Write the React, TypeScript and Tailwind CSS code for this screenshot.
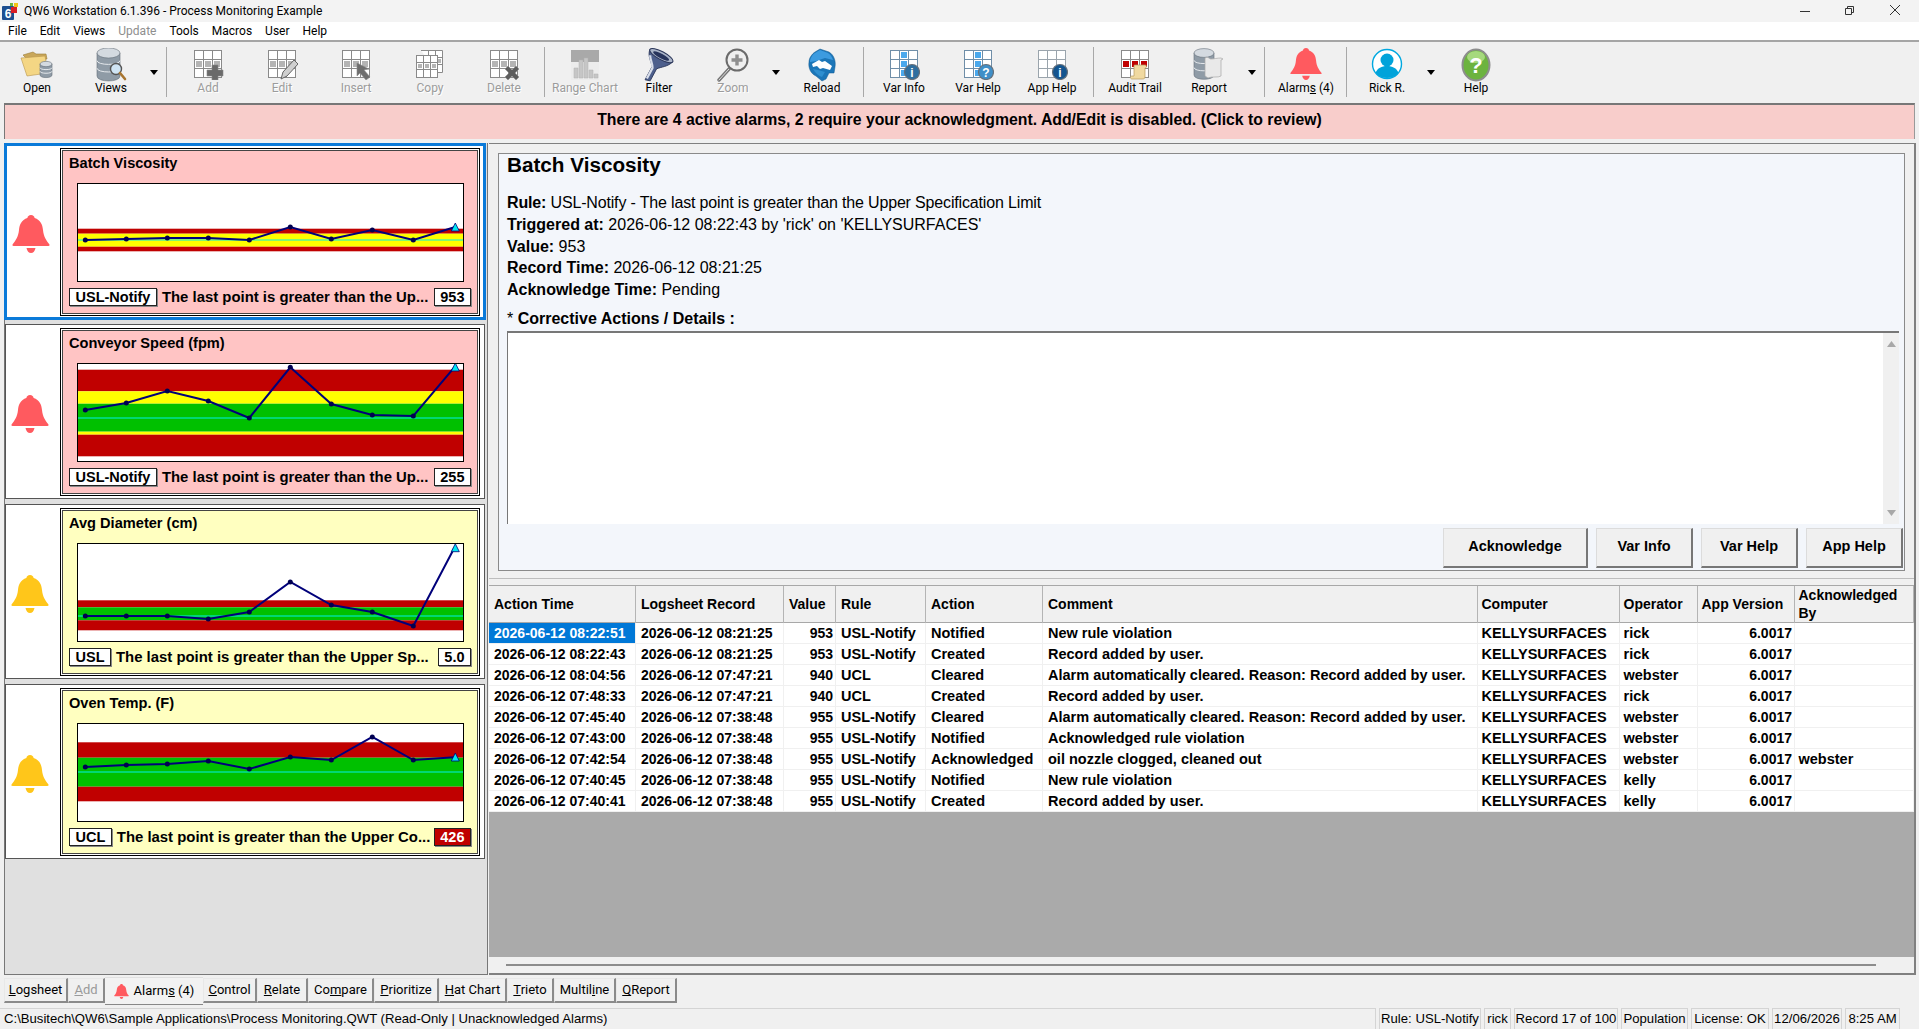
import type { ReactNode } from 'react'

type Band = { from: number; to: number; color: string }

const RED = '#c00000'
const YELLOW = '#ffff00'
const GREEN = '#00c000'

function GridIcon({ line = '#8a8a8a', cell = '#b4b4b4', cells = [3, 4, 5], red = false, children }: { line?: string; cell?: string; cells?: number[]; red?: boolean; children?: ReactNode }) {
  return (
    <svg width="32" height="32" viewBox="0 0 32 32">
      <rect x="2.5" y="2.5" width="27" height="27" fill="#fff" stroke={line} />
      {[0, 1, 2, 3, 4, 5, 6, 7, 8].map((i) =>
        cells.includes(i) ? (
          <rect key={i} x={4 + (i % 3) * 9} y={4 + Math.floor(i / 3) * 9} width="6" height="6" fill={red ? '#c00000' : cell} />
        ) : null
      )}
      <path d="M11.5 2.5v27M20.5 2.5v27M2.5 11.5h27M2.5 20.5h27" stroke={line} fill="none" />
      {children}
    </svg>
  )
}

function Cylinder({ x, y, w, h }: { x: number; y: number; w: number; h: number }) {
  const ry = w * 0.22
  return (
    <g>
      <path d={`M${x} ${y}v${h}c0 ${ry * 1.3} ${w} ${ry * 1.3} ${w} 0v-${h}z`} fill="#8f9ba6" stroke="#66707a" strokeWidth="0.6" />
      <path d={`M${x} ${y + h * 0.33}c0 ${ry} ${w} ${ry} ${w} 0M${x} ${y + h * 0.66}c0 ${ry} ${w} ${ry} ${w} 0`} stroke="#e4e8ec" strokeWidth="1" fill="none" />
      <ellipse cx={x + w / 2} cy={y} rx={w / 2} ry={ry} fill="#d4dae0" stroke="#66707a" strokeWidth="0.6" />
    </g>
  )
}

function OpenIcon() {
  return (
    <svg width="34" height="32" viewBox="0 0 34 32">
      <path d="M3 7l10-3 3 2 10 0 1 5-18 2z" fill="#c9a75a" stroke="#9a7c38" strokeWidth="0.6" />
      <path d="M1 10l24-2 3 17-21 3z" fill="#f4d684" stroke="#b8964c" strokeWidth="0.6" />
      <Cylinder x={20} y={16} w={12} h={11} />
    </svg>
  )
}

function ViewsIcon() {
  return (
    <svg width="32" height="34" viewBox="0 0 32 34">
      <Cylinder x={2} y={5} w={23} h={23} />
      <circle cx="21" cy="21" r="5.5" fill="#cfe4f4" stroke="#555" strokeWidth="1.4" />
      <path d="M25 25l5 6" stroke="#a8752f" strokeWidth="2.6" strokeLinecap="round" />
    </svg>
  )
}

function CopyIcon() {
  return (
    <svg width="32" height="32" viewBox="0 0 32 32">
      <path d="M7 2.5h21.5v22H24" fill="#fff" stroke="#8a8a8a" />
      <path d="M14.5 2.5v5M21.5 2.5v22M21.5 9.5h7M21.5 16.5h7" stroke="#8a8a8a" fill="none" />
      <rect x="23" y="11" width="4" height="4" fill="#b4b4b4" />
      <rect x="2.5" y="7.5" width="21" height="22" fill="#fff" stroke="#8a8a8a" />
      <path d="M9.5 7.5v22M16.5 7.5v22M2.5 14.5h21M2.5 21.5h21" stroke="#8a8a8a" fill="none" />
      <path d="M4 16h4v4H4zM11 16h4v4h-4zM18 16h4v4h-4z" fill="#b4b4b4" />
    </svg>
  )
}

function RangeIcon() {
  return (
    <svg width="32" height="32" viewBox="0 0 32 32">
      <rect x="2" y="2" width="28" height="12" fill="#a9a9a9" />
      <rect x="2" y="14" width="28" height="18" fill="#ececec" />
      <path d="M5 30V20h4v10zM10 30V12h4v18zM15 30V10h4v20zM20 30V22h4v8zM25 30v-4h4v4z" fill="#c6c6c6" stroke="#b0b0b0" strokeWidth="0.5" />
    </svg>
  )
}

function FilterIcon() {
  return (
    <svg width="32" height="34" viewBox="0 0 32 34">
      <g transform="rotate(28 16 12) translate(1 1)">
        <path d="M2 6c1 7 7 10 10 14v15l5-1.500V20c3-4 9-7 11-14z" fill="#4d5f8c" stroke="#2a3558" strokeWidth="0.8" />
        <path d="M5 11c2 4 6 6 8 10v12" stroke="#d8deea" strokeWidth="2.200" fill="none" />
        <ellipse cx="15" cy="6" rx="13" ry="4" fill="#aab4c8" stroke="#2a3558" strokeWidth="1" />
        <ellipse cx="15" cy="6.500" rx="9" ry="2.300" fill="#27345c" />
      </g>
    </svg>
  )
}

function ZoomIcon() {
  return (
    <svg width="34" height="34" viewBox="0 0 34 34">
      <path d="M13 21L3 32" stroke="#777" strokeWidth="3.400" strokeLinecap="round" />
      <path d="M13 21L3 32" stroke="#ddd" strokeWidth="1" strokeLinecap="round" />
      <circle cx="21" cy="12" r="10.500" fill="#efefef" stroke="#6b6b6b" strokeWidth="2" />
      <path d="M21 6.500v11M15.500 12h11" stroke="#8f8f8f" strokeWidth="3.400" />
    </svg>
  )
}

function ReloadIcon() {
  return (
    <svg width="30" height="34" viewBox="0 0 30 34">
      <path d="M13 1l9 3c5 3 7 9 6 15l-1 6-5 0-3 6-4 2-6-5C4 26 1 20 2 14c0-4 3-8 6-10z" fill="#1c76b8" stroke="#125a90" strokeWidth="0.500" />
      <path d="M13 2l8 3c3 2 4 4 5 7l-8-2-9 3-6 1c0-4 3-8 5-9z" fill="#3c9be0" />
      <path d="M5 16l7-4 3 2 3-1 7 5-2 4-7-2-3 1-3-3-4 1z" fill="#fff" />
      <path d="M6 21c2 4 6 7 9 8l3-5-7-2z" fill="#2f8fd0" />
    </svg>
  )
}

function InfoBadge({ mark, color }: { mark: string; color: string }) {
  return (
    <g>
      <circle cx="24" cy="24" r="7.500" fill={color} stroke="#66707a" strokeWidth="1.200" />
      <text x="24" y="28.500" textAnchor="middle" fontSize="12" fontWeight="700" fill="#fff" fontFamily="Liberation Sans, sans-serif">{mark}</text>
    </g>
  )
}

function AuditScroll() {
  return <path d="M16 17h10c2 0 2 3 0 3v9c0 2-2 2-3 2H13c-2 0-2-3 0-3h2v-9c0-2 0-2 1-2z" fill="#f0d9a0" stroke="#b59a5c" strokeWidth="0.700" />
}

function ReportIcon() {
  return (
    <svg width="32" height="34" viewBox="0 0 32 34">
      <Cylinder x={1} y={5} w={20} h={22} />
      <path d="M12 10c3-2 4 1 6 1 3 0 6-1 10-1l2 1-2 1v16c-3 2-9 0-13 2l-3-2z" fill="#e9e9e9" stroke="#a8a8a8" strokeWidth="0.700" />
    </svg>
  )
}

function BellIcon({ color, size }: { color: string; size: number }) {
  return (
    <svg width={size} height={size} viewBox="0 0 38 38">
      <path d="M19 0c2.200 0 3.400 1.400 3.600 3C28.500 5 30.500 9.500 31 15c.6 6.500 3 10 6.300 14.300.6.900.2 1.700-.9 1.700H1.600c-1.100 0-1.500-.8-.9-1.700C4 25 6.400 21.500 7 15c.5-5.500 2.500-10 8.400-12C15.600 1.400 16.800 0 19 0z" fill={color} />
      <path d="M14.500 33h9c-.5 3-2.300 5-4.500 5s-4-2-4.500-5z" fill={color} />
    </svg>
  )
}

function UserIcon() {
  return (
    <svg width="32" height="32" viewBox="0 0 32 32">
      <circle cx="16" cy="16" r="14.500" fill="#fff" stroke="#00a8e0" strokeWidth="1.400" />
      <circle cx="16" cy="12" r="6.500" fill="#00a3da" />
      <path d="M4.500 25c2-5 6-7 11.500-7s9.500 2 11.500 7c-3 3.500-7 5-11.500 5s-8.500-1.500-11.500-5z" fill="#00a3da" />
    </svg>
  )
}

function HelpIcon() {
  return (
    <svg width="30" height="34" viewBox="0 0 30 34">
      <ellipse cx="15" cy="17" rx="13.500" ry="15.500" fill="#6cb33f" stroke="#8d8d8d" strokeWidth="2" />
      <ellipse cx="15" cy="9" rx="9" ry="6" fill="#a6d97d" />
      <text x="15" y="25" textAnchor="middle" fontSize="22" fontWeight="700" fill="#fff" fontFamily="Liberation Sans, sans-serif">?</text>
    </svg>
  )
}

function Caret({ className = '' }: { className?: string }) {
  return (
    <div className={`w-[12px] h-[60px] flex items-center justify-center pb-[1px] ${className}`}>
      <svg width="8" height="5" viewBox="0 0 8 5"><path d="M0 0h8L4 5z" fill="#000" /></svg>
    </div>
  )
}

function Sep({ className = '' }: { className?: string }) {
  return <div className={`w-[1px] h-[50px] mt-[4px] bg-[#a8a8a8] ${className}`} />
}

function Tool({ label, icon, disabled = false, className = '' }: { label: ReactNode; icon: ReactNode; disabled?: boolean; className?: string }) {
  return (
    <div className={`w-[74px] h-[60px] flex flex-col items-center ${className}`}>
      <div className="h-[38px] pt-[5px] flex items-start justify-center">{icon}</div>
      <div className={`leading-[15px] ${disabled ? 'text-[#9c9c9c] [text-shadow:1px_1px_0_#fff]' : 'text-black'}`}>{label}</div>
    </div>
  )
}

function Toolbar() {
  return (
    <div className="h-[60px] flex text-[12px] font-['Roboto',sans-serif] bg-[#f0f0f0]">
      <Tool label="Open" icon={<OpenIcon />} />
      <Tool label="Views" icon={<ViewsIcon />} />
      <Caret />
      <Sep className="ml-[6px]" />
      <Tool label="Add" disabled className="ml-[4px]" icon={
        <GridIcon>
          <path d="M20 17h6v5h5v6h-5v4h-6v-4h-5v-6h5z" fill="#6a6a6a" stroke="#888" strokeWidth="0.6" />
        </GridIcon>
      } />
      <Tool label="Edit" disabled icon={
        <GridIcon>
          <path d="M15 31l2-7L28 12l4 4-11 12z" fill="#cfcfcf" stroke="#666" strokeWidth="1" />
        </GridIcon>
      } />
      <Tool label="Insert" disabled icon={
        <GridIcon>
          <path d="M17 15l0 13 3-3 6 7 4-3-6-7 5-1z" fill="#6e6e6e" stroke="#8a8a8a" strokeWidth="0.6" />
        </GridIcon>
      } />
      <Tool label="Copy" disabled icon={<CopyIcon />} />
      <Tool label="Delete" disabled icon={
        <GridIcon>
          <path d="M17 21l3-3 4 4 4-4 3 3-4 4 4 4-3 3-4-4-4 4-3-3 4-4z" fill="#5e5e5e" stroke="#8a8a8a" strokeWidth="0.5" />
        </GridIcon>
      } />
      <Sep className="ml-[3px]" />
      <Tool label="Range Chart" disabled className="ml-[3px]" icon={<RangeIcon />} />
      <Tool label="Filter" icon={<FilterIcon />} />
      <Tool label="Zoom" disabled icon={<ZoomIcon />} />
      <Caret />
      <Tool label="Reload" className="ml-[3px]" icon={<ReloadIcon />} />
      <Sep className="ml-[4px]" />
      <Tool label="Var Info" className="ml-[3px]" icon={
        <GridIcon line="#6f8ea8" cell="#4aa8ec" cells={[1, 4, 7]}><InfoBadge mark="i" color="#2f6f9f" /></GridIcon>
      } />
      <Tool label="Var Help" icon={
        <GridIcon line="#6f8ea8" cell="#4aa8ec" cells={[1, 4, 7]}><InfoBadge mark="?" color="#3f8fc8" /></GridIcon>
      } />
      <Tool label="App Help" icon={
        <GridIcon line="#9aa4ac" cell="#ffffff" cells={[]}><InfoBadge mark="i" color="#14558f" /></GridIcon>
      } />
      <Sep className="ml-[4px]" />
      <Tool label="Audit Trail" className="ml-[4px]" icon={<GridIcon red><AuditScroll /></GridIcon>} />
      <Tool label="Report" icon={<ReportIcon />} />
      <Caret />
      <Sep className="ml-[6px]" />
      <Tool label={<>Alarm<u>s</u> (4)</>} className="ml-[4px]" icon={<BellIcon color="#ff5a5f" size={32} />} />
      <Sep className="ml-[3px]" />
      <Tool label="Rick R." className="ml-[3px]" icon={<UserIcon />} />
      <Caret className="ml-[1px]" />
      <Tool label="Help" className="ml-[2px]" icon={<HelpIcon />} />
    </div>
  )
}

function TitleBar() {
  return (
    <div className="h-[22px] bg-[#f3f3f3] flex items-center text-[12px] font-['Roboto',sans-serif] text-black">
      <svg className="ml-[2px]" width="17" height="17" viewBox="0 0 17 17">
        <rect x="0" y="3" width="12" height="14" rx="1" fill="#1d4f91" />
        <text x="6" y="15" textAnchor="middle" fontSize="12" fontWeight="700" fill="#fff" fontFamily="Liberation Sans, sans-serif">6</text>
        <rect x="9" y="4" width="6" height="6" fill="#d81f26" />
        <rect x="12" y="0" width="4" height="4" fill="#f2c318" />
        <rect x="8" y="0" width="3" height="3" fill="#6cb33f" />
      </svg>
      <span className="ml-[5px]">QW6 Workstation 6.1.396 - Process Monitoring Example</span>
      <div className="ml-auto flex items-center">
        <svg width="45" height="22" viewBox="0 0 45 22"><path d="M18 11.500h10" stroke="#333" strokeWidth="1" /></svg>
        <svg width="45" height="22" viewBox="0 0 45 22" fill="none" stroke="#333">
          <path d="M18.500 8.500h6v6h-6zM20.500 8.500v-2h6v6h-2" />
        </svg>
        <svg width="45" height="22" viewBox="0 0 45 22"><path d="M18 5l10 10M28 5L18 15" stroke="#333" strokeWidth="1" /></svg>
        <div className="w-[2px]" />
      </div>
    </div>
  )
}

const menu = ['File', 'Edit', 'Views', 'Update', 'Tools', 'Macros', 'User', 'Help']

function MenuBar() {
  return (
    <div className="h-[20px] bg-white border-b-[2px] border-[#a5a5a5] flex items-center pl-[8px] gap-[13px] text-[12px] font-['Roboto',sans-serif] text-black">
      {menu.map((m) => (
        <span key={m} className={m === 'Update' ? 'text-[#8e8e8e]' : ''}>{m}</span>
      ))}
    </div>
  )
}

function Chart({ bands, pts, cyan }: { bands: Band[]; pts: number[]; cyan: number }) {
  const xs = pts.map((_, i) => 8.3 + 41 * i)
  const last = pts[pts.length - 1]
  return (
    <div className="ml-[8px] w-[387px] h-[99px] border border-black bg-white">
      <svg width="385" height="97" viewBox="1 1 385 97" className="block">
        {bands.map((b) => (
          <rect key={b.from} x="1" y={b.from} width="385" height={b.to - b.from} fill={b.color} />
        ))}
        <line x1="1" x2="386" y1={cyan} y2={cyan} stroke="#00f0e8" strokeWidth="1.200" />
        <polyline points={pts.map((p, i) => `${xs[i]},${p}`).join(' ')} fill="none" stroke="#00007a" strokeWidth="2" />
        {pts.slice(0, -1).map((p, i) => (
          <circle key={i} cx={xs[i]} cy={p} r="2.500" fill="#000050" />
        ))}
        <path d={`M378.300 ${last - 4.300}l4 8h-8z`} fill="#00e8f0" stroke="#00007a" strokeWidth="0.800" />
      </svg>
    </div>
  )
}

const alarms = [
  {
    title: 'Batch Viscosity', rule: 'USL-Notify', text: 'The last point is greater than the Up...', value: '953', tone: 'red', selected: true,
    cyan: 57, pts: [57, 56, 55, 55, 57, 44, 56, 47, 57, 44.3],
    bands: [{ from: 45.7, to: 50.7, color: RED }, { from: 50.7, to: 63.7, color: YELLOW }, { from: 63.7, to: 68.3, color: RED }],
  },
  {
    title: 'Conveyor Speed (fpm)', rule: 'USL-Notify', text: 'The last point is greater than the Up...', value: '255', tone: 'red', selected: false,
    cyan: 55, pts: [47, 40, 28, 38, 55, 4.3, 41, 52, 53, 4.3],
    bands: [{ from: 6.7, to: 28.3, color: RED }, { from: 28.3, to: 40.7, color: YELLOW }, { from: 40.7, to: 68.7, color: GREEN }, { from: 68.7, to: 71.7, color: YELLOW }, { from: 71.7, to: 93.3, color: RED }],
  },
  {
    title: 'Avg Diameter (cm)', rule: 'USL', text: 'The last point is greater than the Upper Sp...', value: '5.0', tone: 'yellow', selected: false,
    cyan: 73, pts: [73, 73, 73, 76, 69, 39, 62, 69, 83, 5],
    bands: [{ from: 57.3, to: 64.3, color: RED }, { from: 64.3, to: 77.3, color: GREEN }, { from: 77.3, to: 87.3, color: RED }],
  },
  {
    title: 'Oven Temp. (F)', rule: 'UCL', text: 'The last point is greater than the Upper Co...', value: '426', tone: 'yellow', selected: false, hot: true,
    cyan: 49, pts: [44, 42, 41, 38, 46, 34, 37, 14, 37, 34.3],
    bands: [{ from: 19.3, to: 34.7, color: RED }, { from: 34.7, to: 63.7, color: GREEN }, { from: 63.7, to: 78.3, color: RED }],
  },
]

function AlarmCard({ alarm }: { alarm: (typeof alarms)[number] }) {
  const isRed = alarm.tone === 'red'
  return (
    <div className={`h-[175px] w-[480px] bg-white flex ${alarm.selected ? 'border-[2px] border-[#0a7ad9] outline-1 outline-[#0a7ad9]' : 'border border-[#555]'}`}>
      <div className={`flex items-center justify-center pr-[6px] pt-[5px] ${alarm.selected ? 'w-[53px]' : 'w-[54px]'}`}>
        <BellIcon color={isRed ? '#ff5a5f' : '#ffc61a'} size={38} />
      </div>
      <div className={`w-[420px] h-[168px] border border-black p-[1px] ${alarm.selected ? 'mt-[2px]' : 'mt-[3px]'}`}>
        <div className={`h-full border border-[#444] pl-[6px] flex flex-col ${isRed ? 'bg-[#ffc4c4]' : 'bg-[#ffffc0]'}`}>
          <div className="h-[32px] pt-[2px] leading-[20px] text-[14.600px] font-bold">{alarm.title}</div>
          <Chart bands={alarm.bands} pts={alarm.pts} cyan={alarm.cyan} />
          <div className="mt-[6px] h-[18px] w-[402px] flex items-center text-[14.500px] font-bold whitespace-nowrap">
            <span className="h-[18px] leading-[16px] bg-white border border-[#222] shadow-[1px_1px_0_#888] px-[5.500px]">{alarm.rule}</span>
            <span className="ml-[5px] text-[14.900px]">{alarm.text}</span>
            <span className={`ml-auto h-[18px] leading-[16px] border border-[#222] shadow-[1px_1px_0_#888] px-[5.500px] ${alarm.hot ? 'bg-[#c00000] text-white' : 'bg-white'}`}>{alarm.value}</span>
          </div>
        </div>
      </div>
    </div>
  )
}

const columns = ['Action Time', 'Logsheet Record', 'Value', 'Rule', 'Action', 'Comment', 'Computer', 'Operator', 'App Version', 'Acknowledged By']

const rows = [
  ['2026-06-12 08:22:51', '2026-06-12 08:21:25', '953', 'USL-Notify', 'Notified', 'New rule violation', 'KELLYSURFACES', 'rick', '6.0017', ''],
  ['2026-06-12 08:22:43', '2026-06-12 08:21:25', '953', 'USL-Notify', 'Created', 'Record added by user.', 'KELLYSURFACES', 'rick', '6.0017', ''],
  ['2026-06-12 08:04:56', '2026-06-12 07:47:21', '940', 'UCL', 'Cleared', 'Alarm automatically cleared. Reason: Record added by user.', 'KELLYSURFACES', 'webster', '6.0017', ''],
  ['2026-06-12 07:48:33', '2026-06-12 07:47:21', '940', 'UCL', 'Created', 'Record added by user.', 'KELLYSURFACES', 'rick', '6.0017', ''],
  ['2026-06-12 07:45:40', '2026-06-12 07:38:48', '955', 'USL-Notify', 'Cleared', 'Alarm automatically cleared. Reason: Record added by user.', 'KELLYSURFACES', 'webster', '6.0017', ''],
  ['2026-06-12 07:43:00', '2026-06-12 07:38:48', '955', 'USL-Notify', 'Notified', 'Acknowledged rule violation', 'KELLYSURFACES', 'webster', '6.0017', ''],
  ['2026-06-12 07:42:54', '2026-06-12 07:38:48', '955', 'USL-Notify', 'Acknowledged', 'oil nozzle clogged, cleaned out', 'KELLYSURFACES', 'webster', '6.0017', 'webster'],
  ['2026-06-12 07:40:45', '2026-06-12 07:38:48', '955', 'USL-Notify', 'Notified', 'New rule violation', 'KELLYSURFACES', 'kelly', '6.0017', ''],
  ['2026-06-12 07:40:41', '2026-06-12 07:38:48', '955', 'USL-Notify', 'Created', 'Record added by user.', 'KELLYSURFACES', 'kelly', '6.0017', ''],
]

const gridCols = 'grid grid-cols-[147px_148px_52px_90px_117px_435px_142px_78px_97px_119px]'

function cellClass(i: number, j: number) {
  const numeric = j === 2 || j === 8
  const size = j < 3 || j === 8 ? 'text-[14px]' : 'text-[14.500px]'
  const pad = numeric ? 'pr-[2px] text-right' : j < 6 ? 'pl-[5px]' : 'pl-[3.500px]'
  const picked = i === 0 && j === 0 ? 'bg-[#0078d7] text-white' : ''
  return `leading-[20px] border-r border-b border-[#f0f0f0] whitespace-nowrap ${size} ${pad} ${picked}`
}

function LogTable() {
  return (
    <div className="w-[1425px] text-[14px] font-bold">
      <div className={`${gridCols} h-[38px] bg-[#f0f0f0] border-t border-b border-[#a8a8a8]`}>
        {columns.map((c, j) => (
          <div key={c} className={`pb-[2px] flex items-center border-r border-[#b4b4b4] leading-[18px] ${j < 6 ? 'pl-[5px]' : 'pl-[3.500px]'}`}>{c}</div>
        ))}
      </div>
      <div className="bg-white">
        {rows.map((r, i) => (
          <div key={i} className={`${gridCols} h-[21px]`}>
            {r.map((v, j) => (
              <div key={j} className={cellClass(i, j)}>{v}</div>
            ))}
          </div>
        ))}
      </div>
    </div>
  )
}

function DetailButton({ label, className }: { label: string; className: string }) {
  return (
    <button className={`h-[40px] bg-[#f0f0f0] border-t border-l border-[#dcdcdc] border-r-[2px] border-b-[2px] border-r-[#777] border-b-[#777] text-[14.500px] font-bold ${className}`}>
      {label}
    </button>
  )
}

function Details() {
  return (
    <div className="ml-[9px] mt-[9px] w-[1407px] h-[418px] border border-[#8a8a8a] bg-[#f3f6fb] pl-[8px] pr-[1px] text-[16px] text-black flex flex-col shrink-0">
      <div className="h-[22px] leading-[22px] text-[20.700px] font-bold">Batch Viscosity</div>
      <div className="mt-[16px] leading-[21.750px]">
        <div className="tracking-[-0.160px]"><b>Rule:</b> USL-Notify - The last point is greater than the Upper Specification Limit</div>
        <div><b>Triggered at:</b> 2026-06-12 08:22:43 by 'rick' on 'KELLYSURFACES'</div>
        <div><b>Value:</b> 953</div>
        <div><b>Record Time:</b> 2026-06-12 08:21:25</div>
        <div><b>Acknowledge Time:</b> Pending</div>
      </div>
      <div className="mt-[7px] h-[22px] leading-[22px] font-bold"><span className="font-normal">*</span> Corrective Actions / Details :</div>
      <div className="mt-[1px] mr-[4px] h-[193px] bg-white border-t-[2px] border-l border-[#777] flex justify-end">
        <div className="w-[16px] bg-[#f0f0f0] flex flex-col items-center justify-between py-[8px]">
          <svg width="9" height="6" viewBox="0 0 9 6"><path d="M4.500 0L9 6H0z" fill="#a8a8a8" /></svg>
          <svg width="9" height="6" viewBox="0 0 9 6"><path d="M0 0h9L4.500 6z" fill="#a8a8a8" /></svg>
        </div>
      </div>
      <div className="mt-[4px] flex justify-end gap-[8px]">
        <DetailButton label="Acknowledge" className="w-[145px]" />
        <DetailButton label="Var Info" className="w-[97px]" />
        <DetailButton label="Var Help" className="w-[97px]" />
        <DetailButton label="App Help" className="w-[97px]" />
      </div>
    </div>
  )
}

function TabButton({ children, className = '' }: { children: ReactNode; className?: string }) {
  return (
    <div className={`h-[25px] flex items-center justify-center bg-[#f0f0f0] border-t border-l border-[#e8e8e8] border-r-[2px] border-b-[2px] border-r-[#8a8a8a] border-b-[#8a8a8a] ${className}`}>
      {children}
    </div>
  )
}

function Tabs() {
  return (
    <div className="h-[33px] pl-[4px] pt-[2px] flex items-start text-[13px] font-['Roboto',sans-serif] text-black">
      <TabButton className="w-[64px] mt-[1px]"><span><u>L</u>ogsheet</span></TabButton>
      <TabButton className="w-[37px] mt-[1px] text-[#9a9a9a]"><span><u>A</u>dd</span></TabButton>
      <div className="w-[98px] h-[27px] flex items-center justify-center gap-[5px] bg-[#f2f2f2] border-t border-[#e0e0e0] shadow-[0_1px_0_#888]">
        <BellIcon color="#ff5a5f" size={15} />
        <span>Alarm<u>s</u> (4)</span>
      </div>
      <TabButton className="w-[54px] mt-[1px]"><span><u>C</u>ontrol</span></TabButton>
      <TabButton className="w-[51px] mt-[1px]"><span><u>R</u>elate</span></TabButton>
      <TabButton className="w-[66px] mt-[1px]"><span>Co<u>m</u>pare</span></TabButton>
      <TabButton className="w-[65px] mt-[1px]"><span><u>P</u>rioritize</span></TabButton>
      <TabButton className="w-[68px] mt-[1px]"><span><u>H</u>at Chart</span></TabButton>
      <TabButton className="w-[47px] mt-[1px]"><span><u>T</u>rieto</span></TabButton>
      <TabButton className="w-[62px] mt-[1px]"><span>Multil<u>i</u>ne</span></TabButton>
      <TabButton className="w-[61px] mt-[1px]"><span><u>Q</u>Report</span></TabButton>
    </div>
  )
}

const statusCells = [
  { text: 'Rule: USL-Notify', w: 'w-[102px]' },
  { text: 'rick', w: 'w-[27px]' },
  { text: 'Record 17 of 100', w: 'w-[104px]' },
  { text: 'Population', w: 'w-[67px]' },
  { text: 'License: OK', w: 'w-[78px]' },
  { text: '12/06/2026', w: 'w-[70px]' },
  { text: '8:25 AM', w: 'w-[55px]' },
]

function StatusBar() {
  return (
    <div className="h-[21px] flex gap-[3px] text-[13.150px] text-black leading-[20px]">
      <div className="w-[1376px] pl-[4px] border-t border-r border-[#d4d4d4] whitespace-nowrap">C:\Busitech\QW6\Sample Applications\Process Monitoring.QWT (Read-Only | Unacknowledged Alarms)</div>
      {statusCells.map((c) => (
        <div key={c.text} className={`${c.w} border-t border-l border-r border-[#d4d4d4] text-center whitespace-nowrap`}>{c.text}</div>
      ))}
    </div>
  )
}

export default function App() {
  return (
    <div className="w-[1919px] h-[1029px] overflow-hidden bg-[#f0f0f0] flex flex-col font-['Liberation_Sans',Arial,sans-serif] text-black">
      <TitleBar />
      <MenuBar />
      <div className="h-[1px] bg-[#f0f0f0]" />
      <Toolbar />
      <div className="mx-[4px] h-[36px] bg-[#f8cdcb] border-t-[2px] border-l border-[#777] border-r border-r-[#999] text-center text-[15.800px] font-bold leading-[30px]">
        There are 4 active alarms, 2 require your acknowledgment. Add/Edit is disabled. (Click to review)
      </div>
      <div className="mt-[4px] ml-[4px] h-[832px] flex">
        <div className="w-[484px] h-full bg-[#e0e0e0] border-r border-b border-l border-[#777] flex flex-col gap-[5px] pt-[1px]">
          {alarms.map((a) => (
            <AlarmCard key={a.title} alarm={a} />
          ))}
        </div>
        <div className="ml-[1px] w-[1427px] h-full border-t border-r-[2px] border-b-[2px] border-[#808080] flex flex-col">
          <Details />
          <div className="h-[14px] shrink-0 flex items-center">
            <div className="w-full h-[1px] bg-[#bdbdbd]" />
          </div>
          <LogTable />
          <div className="h-[145px] w-[1425px] bg-[#aaaaaa] shrink-0" />
          <div className="flex-1 flex items-center pl-[17px] pr-[38px]">
            <div className="w-full h-[2px] bg-[#8c8c8c]" />
          </div>
        </div>
      </div>
      <Tabs />
      <StatusBar />
    </div>
  )
}
